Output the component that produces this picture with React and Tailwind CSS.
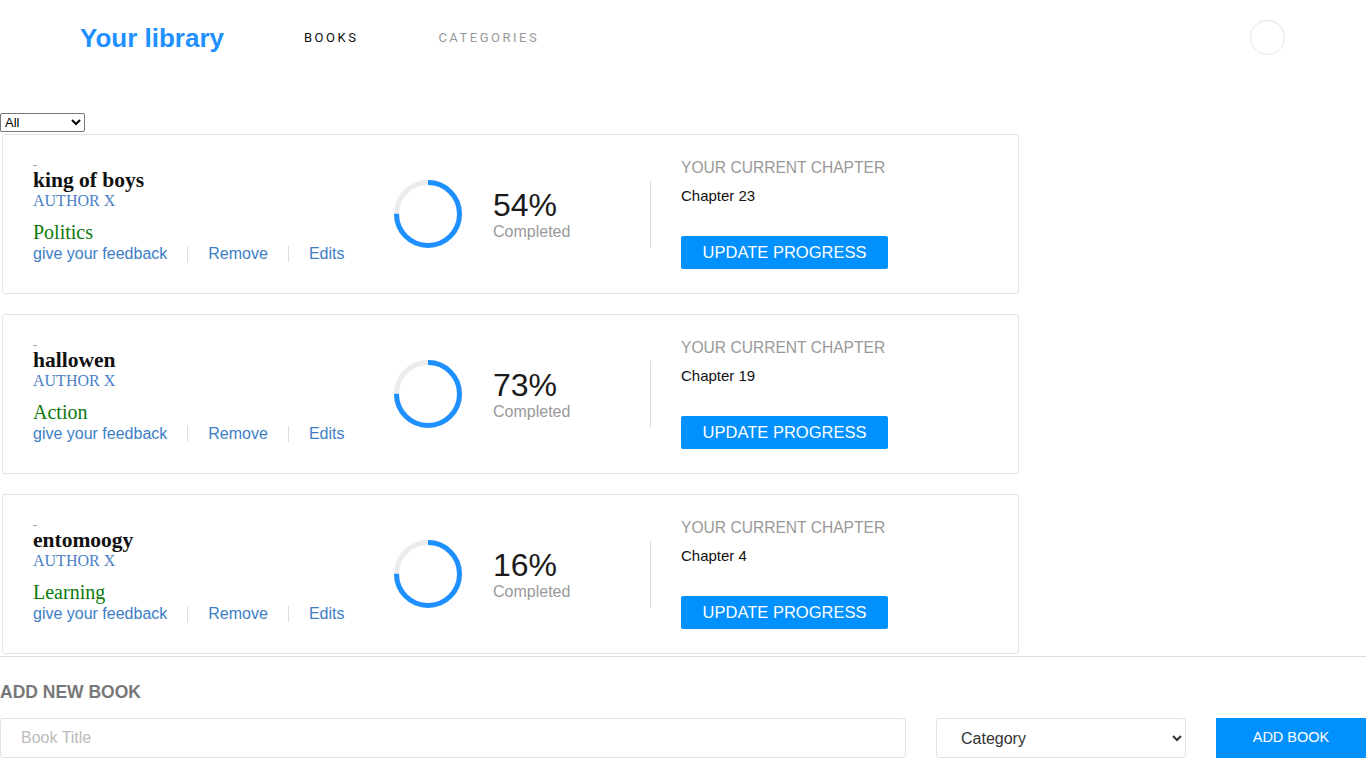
import React from "react";

const books = [
  { title: "king of boys", cat: "Politics", pct: "54%", chapter: "Chapter 23" },
  { title: "hallowen", cat: "Action", pct: "73%", chapter: "Chapter 19" },
  { title: "entomoogy", cat: "Learning", pct: "16%", chapter: "Chapter 4" },
];

function Ring() {
  const r = 31.5;
  const c = 2 * Math.PI * r;
  return (
    <svg width="68" height="68" viewBox="0 0 68 68" className="shrink-0">
      <circle cx="34" cy="34" r={r} fill="none" stroke="#ececec" strokeWidth="5" />
      <circle
        cx="34"
        cy="34"
        r={r}
        fill="none"
        stroke="#1e90ff"
        strokeWidth="5"
        strokeDasharray={`${c * 0.75} ${c}`}
        transform="rotate(-90 34 34)"
      />
    </svg>
  );
}

function Card({ b }) {
  return (
    <div className="ml-[2px] w-[1017px] h-[160px] border border-[#e2e2e2] rounded-[3px] flex items-center pl-[30px]">
      <div className="w-[361px] shrink-0 flex flex-col">
        <div className="w-[4px] h-[1px] bg-[#aaa]" />
        <div className="mt-[3px] font-['Liberation_Serif',serif] font-bold text-[21.5px] leading-[22px] text-[#111]">
          {b.title}
        </div>
        <div className="font-['Liberation_Serif',serif] text-[16px] leading-[20px] text-[#4a80c6]">AUTHOR X</div>
        <div className="mt-[10px] font-['Liberation_Serif',serif] text-[20px] leading-[22px] text-[#0b7a0b]">
          {b.cat}
        </div>
        <div className="mt-[1px] flex items-center font-['Liberation_Sans',Arial,sans-serif] text-[16px] leading-[20px] text-[#3d7ec6]">
          <span>give your feedback</span>
          <span className="mx-[20px] w-[1px] h-[16px] bg-[#ddd]" />
          <span>Remove</span>
          <span className="mx-[20px] w-[1px] h-[16px] bg-[#ddd]" />
          <span>Edits</span>
        </div>
      </div>
      <Ring />
      <div className="ml-[31px] w-[157px] shrink-0 flex flex-col font-['Liberation_Sans',Arial,sans-serif]">
        <div className="text-[32px] leading-[36px] text-[#1a1a1a]">{b.pct}</div>
        <div className="text-[16px] leading-[18px] text-[#999]">Completed</div>
      </div>
      <div className="w-[1px] h-[67px] bg-[#dcdcdc] shrink-0" />
      <div className="ml-[30px] flex flex-col items-start font-['Liberation_Sans',Arial,sans-serif]">
        <div className="text-[15.6px] leading-[18px] text-[#999]">YOUR CURRENT CHAPTER</div>
        <div className="mt-[10px] text-[15px] leading-[18px] text-[#111]">{b.chapter}</div>
        <button className="mt-[31px] h-[33px] w-[207px] bg-[#0091ff] rounded-[2px] text-white text-[16.5px] leading-[33px] text-center">
          UPDATE PROGRESS
        </button>
      </div>
    </div>
  );
}

export default function App() {
  return (
    <div className="w-[1366px] bg-white font-['Liberation_Sans',Arial,sans-serif]">
      <header className="h-[75px] flex items-center pl-[80px] pr-[81px]">
        <div className="font-['Liberation_Sans',Arial,sans-serif] font-bold text-[26px] text-[#1e90ff] leading-none">
          Your library
        </div>
        <nav className="ml-[80px] flex gap-[80px] font-['Roboto',sans-serif] text-[13px] tracking-[2.5px]">
          <span className="text-[#111]">BOOKS</span>
          <span className="text-[#999]">CATEGORIES</span>
        </nav>
        <div className="ml-auto w-[35px] h-[35px] rounded-full border border-[#e4e4e4]" />
      </header>
      <select className="block mt-[38px] w-[85px] h-[19px] text-[13px] leading-[15px] border border-[#767676] rounded-[2px] bg-white text-black font-['Liberation_Sans',Arial,sans-serif] px-0">
        <option>All</option>
      </select>
      <div className="mt-[2px] flex flex-col gap-[20px]">
        {books.map((b) => (
          <Card key={b.title} b={b} />
        ))}
      </div>
      <div className="mt-[2px] h-[1px] bg-[#dedede] w-full" />
      <div className="pt-[25px] font-bold text-[17.5px] leading-[20px] text-[#777]">ADD NEW BOOK</div>
      <div className="mt-[16px] flex items-start">
        <input
          placeholder="Book Title"
          className="w-[906px] h-[40px] border border-[#e2e2e2] rounded-[3px] pl-[20px] text-[16px] text-[#333] placeholder:text-[#bbb] outline-none"
        />
        <select className="ml-[30px] w-[250px] h-[40px] border border-[#e2e2e2] rounded-[3px] pl-[20px] pr-[6px] text-[16px] text-[#333] bg-white">
          <option>Category</option>
        </select>
        <button className="ml-[30px] w-[150px] h-[40px] bg-[#0091ff] text-white text-[14.5px]">ADD BOOK</button>
      </div>
    </div>
  );
}
